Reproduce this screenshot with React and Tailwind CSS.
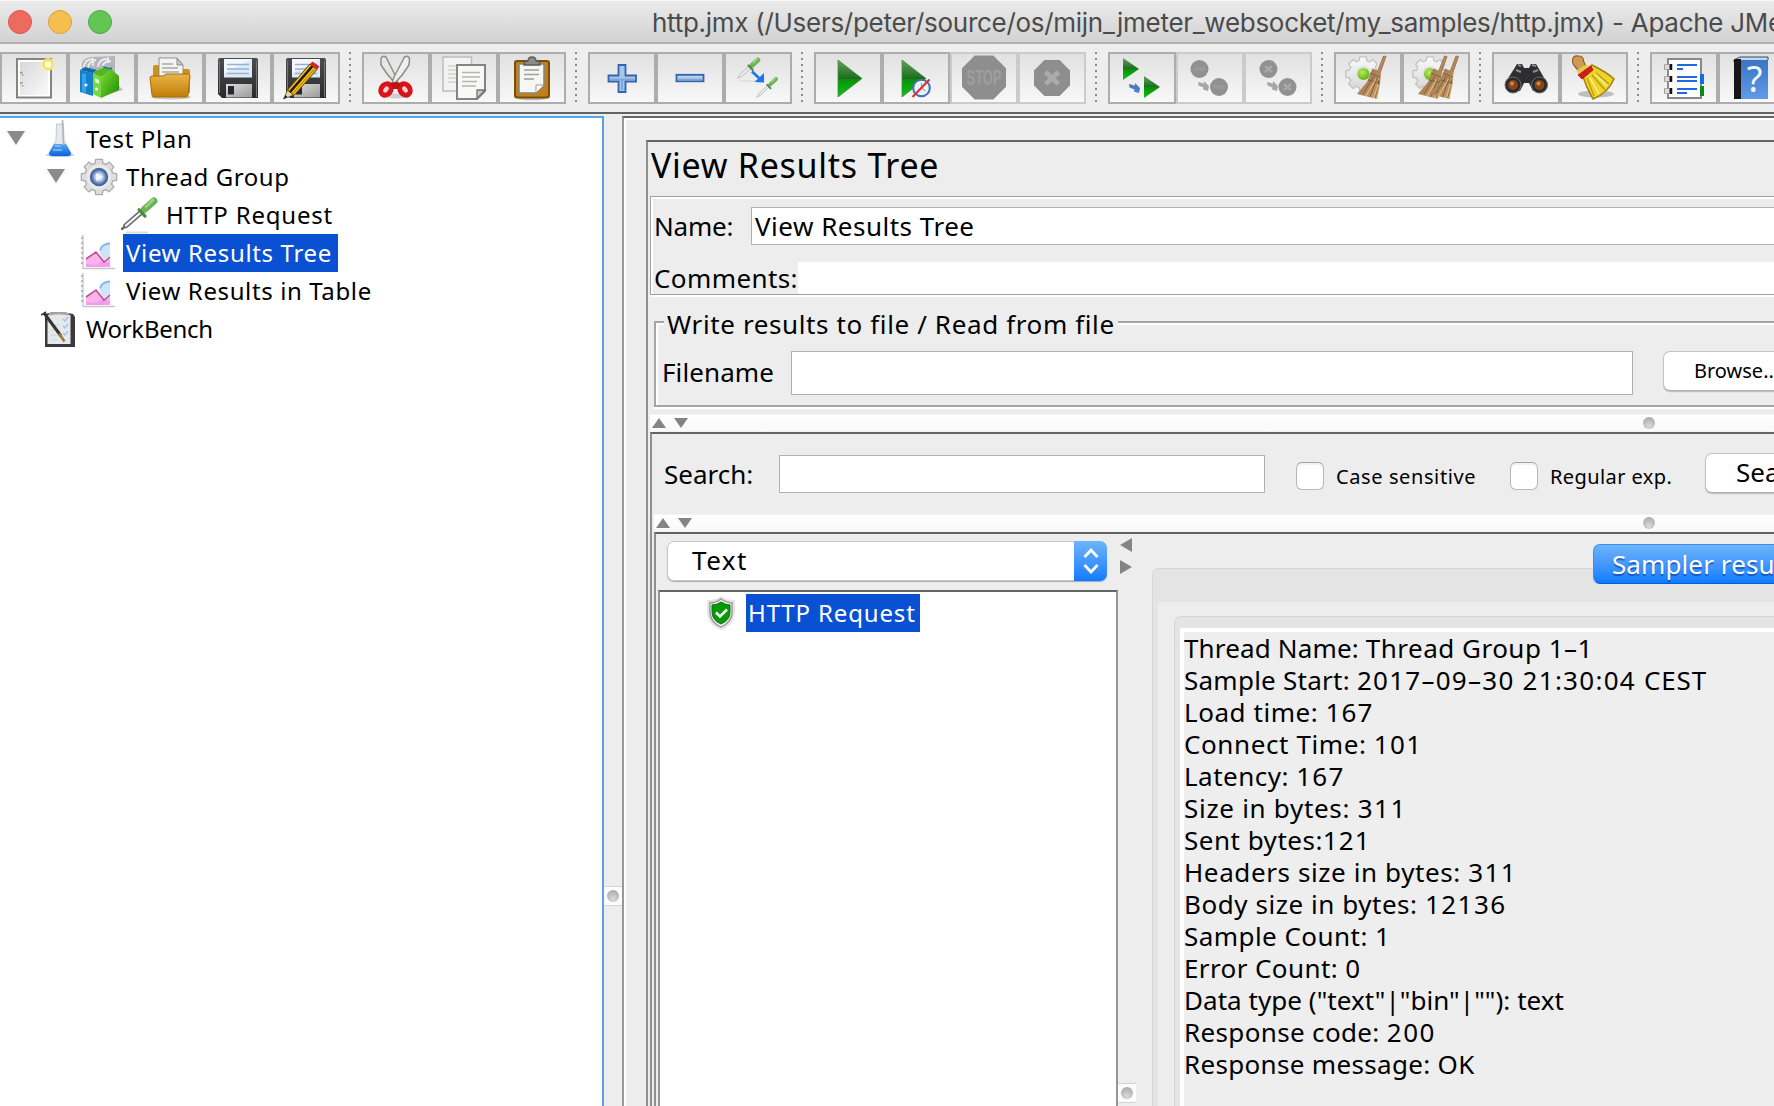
import React from "react";

/* ---------- shared drawing parts ---------- */

function Gradients() {
  return (
    <svg className="absolute h-0 w-0" aria-hidden="true">
      <defs>
        <linearGradient id="page" x1="0" y1="0" x2="1" y2="1">
          <stop offset="0" stopColor="#d8d8d8" />
          <stop offset="1" stopColor="#fafafa" />
        </linearGradient>
        <linearGradient id="gold" x1="0" y1="0" x2="0" y2="1">
          <stop offset="0" stopColor="#e9b548" />
          <stop offset="1" stopColor="#c07d08" />
        </linearGradient>
        <linearGradient id="green" x1="0" y1="0" x2="1" y2="1">
          <stop offset="0" stopColor="#7fdc3a" />
          <stop offset="1" stopColor="#1f8a00" />
        </linearGradient>
        <linearGradient id="play" x1="0" y1="0" x2="0" y2="1">
          <stop offset="0" stopColor="#5fa45f" />
          <stop offset="0.5" stopColor="#1d6b1d" />
          <stop offset="0.52" stopColor="#0a8f0a" />
          <stop offset="1" stopColor="#10c410" />
        </linearGradient>
        <linearGradient id="dark" x1="0" y1="0" x2="0" y2="1">
          <stop offset="0" stopColor="#4c4c50" />
          <stop offset="1" stopColor="#2b2b2e" />
        </linearGradient>
        <linearGradient id="metal" x1="0" y1="0" x2="1" y2="1">
          <stop offset="0" stopColor="#dcdcdc" />
          <stop offset="1" stopColor="#9b9b9b" />
        </linearGradient>
        <linearGradient id="straw" x1="0" y1="0" x2="1" y2="1">
          <stop offset="0" stopColor="#8d6b48" />
          <stop offset="1" stopColor="#d3a36a" />
        </linearGradient>
        <linearGradient id="book" x1="0" y1="0" x2="0" y2="1">
          <stop offset="0" stopColor="#3a74c4" />
          <stop offset="1" stopColor="#5f9bea" />
        </linearGradient>
        <linearGradient id="fluid" x1="0" y1="0" x2="0" y2="1">
          <stop offset="0" stopColor="#5aa7ee" />
          <stop offset="1" stopColor="#0a62e0" />
        </linearGradient>
        <linearGradient id="steel" x1="0" y1="0" x2="0" y2="1">
          <stop offset="0" stopColor="#fafafa" />
          <stop offset="1" stopColor="#d6d6d6" />
        </linearGradient>
        <radialGradient id="knob" cx="0.5" cy="0.75" r="0.8">
          <stop offset="0" stopColor="#dadada" />
          <stop offset="1" stopColor="#a6a6a6" />
        </radialGradient>
        <radialGradient id="ball" cx="0.4" cy="0.35" r="0.7">
          <stop offset="0" stopColor="#b6ee5a" />
          <stop offset="1" stopColor="#5cae0c" />
        </radialGradient>
        <radialGradient id="gearhub" cx="0.5" cy="0.5" r="0.5">
          <stop offset="0" stopColor="#ffffff" />
          <stop offset="0.4" stopColor="#c8d6ee" />
          <stop offset="1" stopColor="#2a4f94" />
        </radialGradient>
      </defs>
    </svg>
  );
}

function Gear({ cx, cy, r, stroke = "#c2c2c2", fill = "url(#steel)" }) {
  const pts = [];
  for (let i = 0; i < 8; i++) {
    const a = (i * Math.PI) / 4;
    [[-0.27, 0.8], [-0.19, 1], [0.19, 1], [0.27, 0.8]].forEach(([d, k]) => {
      pts.push(`${(cx + r * k * Math.cos(a + d)).toFixed(2)},${(cy + r * k * Math.sin(a + d)).toFixed(2)}`);
    });
  }
  return <polygon points={pts.join(" ")} fill={fill} stroke={stroke} strokeWidth="1.3" strokeLinejoin="round" />;
}

function Octagon({ cx, cy, r, ry = r, fill }) {
  const k = 0.42;
  const p = [[-k, -1], [k, -1], [1, -k], [1, k], [k, 1], [-k, 1], [-1, k], [-1, -k]];
  return <polygon points={p.map(([a, b]) => `${cx + a * r},${cy + b * ry}`).join(" ")} fill={fill} />;
}

function Pipette({ x1, y1, x2, y2, w = 3, glass = "#b4b8b4" }) {
  const mx = x1 + (x2 - x1) * 0.6;
  const my = y1 + (y2 - y1) * 0.6;
  const nx = x1 + (x2 - x1) * 0.12;
  const ny = y1 + (y2 - y1) * 0.12;
  const bx = x1 + (x2 - x1) * 0.7;
  const by = y1 + (y2 - y1) * 0.7;
  return (
    <g strokeLinecap="round">
      <line x1={x1} y1={y1} x2={nx} y2={ny} stroke={glass} strokeWidth={w * 0.7} />
      <line x1={nx} y1={ny} x2={mx} y2={my} stroke={glass} strokeWidth={w * 1.5} />
      <line x1={nx} y1={ny} x2={mx} y2={my} stroke="#f6f6f6" strokeWidth={w * 0.6} />
      <line x1={bx} y1={by} x2={x2} y2={y2} stroke="#6db455" strokeWidth={w * 2} />
      <line x1={bx + 1.5} y1={by - 2.5} x2={x2 - 1} y2={y2 - 1} stroke="#9bd585" strokeWidth={w * 0.7} />
      <line x1={mx - w * 0.6} y1={my - w * 0.7} x2={mx + w * 1.1} y2={my + w * 1.1} stroke="#4c8a3c" strokeWidth={w * 0.9} />
    </g>
  );
}

function Floppy() {
  return (
    <g>
      <path d="M14 8q0-2 2-2h36q2 0 2 2v38H18l-4-4z" fill="url(#dark)" />
      <path d="M15.500 9v32M52.500 9v36" stroke="#77777b" strokeWidth="1" />
      <rect x="20" y="7" width="28" height="18.500" fill="#dfeaf6" />
      <path d="M20 7h28l-28 14z" fill="#f4f8fd" />
      <path d="M23 12.500h22M23 17h22M23 21.500h22" stroke="#93b2d4" strokeWidth="1.5" />
      <rect x="22" y="32" width="26" height="13.500" fill="url(#metal)" />
      <rect x="24" y="34" width="6" height="8.500" fill="#28282a" />
    </g>
  );
}

function Broom({ dx = 0 }) {
  return (
    <g transform={`translate(${dx} 0)`}>
      <path d="M49.500 4l2.500.5-7 20-3-1z" fill="#b98a58" stroke="#8f6a44" strokeWidth="0.8" />
      <path d="M38.500 16.500L47 20 46 32 43 47 23 42 33 30z" fill="url(#straw)" />
      <path d="M36 21l10 4M34 28l12 3M40 24l-11 18M43 26l-7 19M45 28l-4 18" stroke="#7d5f42" strokeWidth="1" fill="none" />
      <path d="M42 27l-10 17M44 32l-4 14" stroke="#ecc48e" strokeWidth="1" />
    </g>
  );
}

function SmallArrow({ fill, x = 21, y = 31 }) {
  return <path transform={`translate(${x} ${y})`} d="M0 1l6 1.500V0l5 5-1 5-5-1.500.5-2-5-2z" fill={fill} />;
}

/* ---------- toolbar icons ---------- */

const icons = {
  blank: (
    <g>
      <rect x="17" y="7" width="34" height="38.500" fill="#fff" stroke="#85857f" strokeWidth="2" />
      <rect x="20" y="10" width="28" height="33" fill="url(#page)" />
      <path d="M20 20.500h2.500M22.500 22v1.500M20 31h2.500M22.500 33v1.500" stroke="#8c8c8c" strokeWidth="1.3" />
      <circle cx="48" cy="12.500" r="6.500" fill="#fdf7b0" opacity="0.75" />
      <circle cx="48" cy="12.500" r="4.500" fill="#fffce8" stroke="#f5e154" strokeWidth="2.500" />
    </g>
  ),
  templates: (
    <g>
      <path d="M34 44l21-6-4-4-9 1z" fill="#9a9a9a" opacity="0.6" />
      <path d="M14 16q-2-9 9-11l24-1v18l-22 2z" fill="#b3b6ba" />
      <path d="M16 16q0-9 9-9M20 17q0-8 8-9M30 15q1-8 9-8M34 16q1-7 9-7M25 6v8M40 5v6" stroke="#ececec" strokeWidth="1.8" fill="none" />
      <path d="M12 18l13 3v23l-13-4z" fill="#1580c8" />
      <path d="M12 18l5-3 12 3-4 3zM33 14l9 2 2-1-1 6z" fill="#0a69ae" />
      <path d="M14 21l4 1v19l-4-1z" fill="#35a5ea" />
      <path d="M25 21l8 4v21l-8-4z" fill="#76d943" />
      <path d="M33 25l10-8 8 7v14l-18 8z" fill="url(#green)" />
      <path d="M25 21l9-5 9 1-10 8z" fill="#55b61e" />
      <circle cx="28.500" cy="37" r="1.600" fill="#fff" />
      <circle cx="18" cy="33" r="1.600" fill="#e2f3ff" />
      <path d="M27 26l4 2v4l-4-2z" fill="#e5fbd6" />
    </g>
  ),
  open: (
    <g>
      <ellipse cx="35" cy="45" rx="20" ry="2.500" fill="#999" opacity="0.5" />
      <path d="M17 15q0-2 2-2h6l3 4h24q2 0 2 2v22H17z" fill="#cf9117" />
      <path d="M23 6h18l6 7v15H23z" fill="#f4f4f2" stroke="#90908c" strokeWidth="1" />
      <path d="M41 6v7h6z" fill="#c9cbc7" stroke="#8a8a86" strokeWidth="1" />
      <path d="M26 12h11M26 16h16M26 20h17" stroke="#a9a9a9" strokeWidth="1.500" />
      <path d="M14 26q0-2 2-2h11l3-2h22q2 0 2 2l-2 19q0 2-2 2H18q-2 0-2-2z" fill="url(#gold)" stroke="#a86c04" strokeWidth="1" />
    </g>
  ),
  save: <Floppy />,
  saveAs: (
    <g>
      <Floppy />
      <path d="M11.500 47l4-9 6 5z" fill="#ecd2a4" stroke="#6b5530" strokeWidth="0.8" />
      <path d="M11.500 47l2-4 2 2z" fill="#222" />
      <path d="M15.500 38L38 12l7 5.500L22 43.500z" fill="#f2bd20" stroke="#5a4300" strokeWidth="1" />
      <path d="M18 40L40.500 14" stroke="#1d1a10" strokeWidth="2.600" />
      <path d="M20.500 42L43.500 16" stroke="#c98f0a" strokeWidth="1.200" />
      <path d="M38 12l2.500-2.500 7 5L45 17.500z" fill="#d8222c" />
    </g>
  ),
  cut: (
    <g>
      <ellipse cx="34" cy="44" rx="11" ry="2.500" fill="#aaa" opacity="0.5" />
      <path d="M19 7q1-4 5-2l10 20 2 6h-3q-8-8-14-18z" fill="#e6e6e4" stroke="#8d8d89" strokeWidth="1.500" />
      <path d="M47.500 7q-1-4-5-2L32 25l-2 6h3q8-8 14-18z" fill="#efefed" stroke="#8d8d89" strokeWidth="1.500" />
      <ellipse cx="24" cy="37.500" rx="4.800" ry="6" transform="rotate(35 24 37.500)" fill="#f0d4d4" stroke="#d8141a" strokeWidth="5" />
      <ellipse cx="43" cy="37.500" rx="4.800" ry="6" transform="rotate(-35 43 37.500)" fill="#f0d4d4" stroke="#d8141a" strokeWidth="5" />
      <path d="M28 31l5.500-1 5.500 1-3 6h-5z" fill="#c01015" />
    </g>
  ),
  copy: (
    <g>
      <rect x="13" y="5" width="28.500" height="34" fill="#f3f3f3" stroke="#bdbdbd" strokeWidth="1.500" />
      <path d="M18 14h8M18 18h8M18 22h8M18 26h8M18 30h8" stroke="#d2d2d2" strokeWidth="1.300" />
      <path d="M27 13h28v26l-8 8H27z" fill="#f8f8f7" stroke="#83857f" strokeWidth="2" />
      <path d="M55 38l-8 8.500v-8.500z" fill="#c8cac5" stroke="#73756f" strokeWidth="1.300" />
      <path d="M32 20.500h18M32 25h18M32 29.500h15M32 34h14" stroke="#b4b4b4" strokeWidth="1.600" />
    </g>
  ),
  paste: (
    <g>
      <ellipse cx="34" cy="46.500" rx="14" ry="1.800" fill="#999" opacity="0.6" />
      <rect x="17" y="9" width="34" height="36.500" rx="2" fill="#c0801c" stroke="#7b4d06" strokeWidth="2" />
      <path d="M21 12h25v21l-8 8H21z" fill="#f6f6f5" stroke="#85857f" strokeWidth="1.500" />
      <path d="M46 33l-8 8v-8z" fill="#fff" stroke="#999" strokeWidth="1" />
      <path d="M26 18h15M26 22.500h15M26 27h10" stroke="#9d9d9d" strokeWidth="1.600" />
      <path d="M26 12q0-3 4-3 0-4 4-4t4 4q4 0 4 3v1H26z" fill="#8b8d86" stroke="#5b5d58" strokeWidth="1.300" />
    </g>
  ),
  plus: (
    <g>
      <path d="M30.500 13h7v10.500H48v6H37.500V40h-7V29.500H20.500v-6h10z" fill="#a9c6e8" stroke="#2f66ad" strokeWidth="1.800" />
      <path d="M34 27v11M22 27.500h24.500" stroke="#7fa8d8" strokeWidth="2" />
    </g>
  ),
  minus: (
    <g>
      <rect x="20.500" y="22.800" width="27" height="6.500" fill="#b6cfec" stroke="#2f66ad" strokeWidth="1.800" />
      <path d="M22 27.500h24" stroke="#7fa8d8" strokeWidth="1.800" />
    </g>
  ),
  toggle: (
    <g>
      <path d="M15 29h24" stroke="#ddd" strokeWidth="1.500" />
      <Pipette x1={14} y1={26} x2={34} y2={8} w={2.400} glass="#c4c4c4" />
      <Pipette x1={33} y1={45} x2={52} y2={27} w={2} glass="#c4c4c4" />
      <path d="M28 19.500l7 6.500" stroke="#1e74f0" strokeWidth="2.600" />
      <path d="M40 21v9.500l-9.500-.5z" fill="#1e74f0" />
    </g>
  ),
  start: <path d="M24 8l24 18.500L24 45z" fill="url(#play)" stroke="#3f8f3f" strokeWidth="0.8" />,
  startNoPause: (
    <g>
      <path d="M20 8l24 18.500L20 45z" fill="url(#play)" stroke="#3f8f3f" strokeWidth="0.8" />
      <circle cx="39.500" cy="36" r="8.300" fill="#eef3fa" stroke="#3a74b8" strokeWidth="2" />
      <path d="M39.500 31v5l4 3" stroke="#9aa" strokeWidth="1.300" fill="none" />
      <path d="M30.500 45l17-17.500" stroke="#e03030" strokeWidth="2.200" />
    </g>
  ),
  stop: (
    <g>
      <Octagon cx={34} cy={25.500} r={22} ry={22} fill="#8e8e8e" />
      <text x="34" y="33" textAnchor="middle" textLength="35" lengthAdjust="spacingAndGlyphs" className="font-['Liberation_Sans'] text-[22px] font-bold" fill="#9e9e9e">STOP</text>
    </g>
  ),
  shutdown: (
    <g>
      <Octagon cx={34} cy={26} r={18} fill="#8e8e8e" />
      <path d="M27.500 20l13 12M40.500 20l-13 12" stroke="#ababab" strokeWidth="5" />
    </g>
  ),
  remoteStart: (
    <g>
      <path d="M15 6l16 11-16 11z" fill="url(#play)" />
      <path d="M36 24l16 11-16 11z" fill="url(#play)" />
      <SmallArrow fill="#4a7cc0" />
    </g>
  ),
  remoteStop: (
    <g>
      <circle cx="23.500" cy="17" r="9" fill="#919191" />
      <circle cx="43" cy="35" r="9" fill="#919191" />
      <path d="M18 17h11M37.500 35h11" stroke="#9a9a9a" strokeWidth="3.500" />
      <SmallArrow fill="#a6a6a6" x={22} y={29} />
    </g>
  ),
  remoteShutdown: (
    <g>
      <circle cx="24.500" cy="17" r="9" fill="#919191" />
      <circle cx="43.500" cy="35" r="9" fill="#919191" />
      <path d="M21 14l7 6M28 14l-7 6M40 32l7 6M47 32l-7 6" stroke="#a8a8a8" strokeWidth="2.500" />
      <SmallArrow fill="#a6a6a6" x={23} y={29} />
    </g>
  ),
  clear: (
    <g>
      <Gear cx={29} cy={22} r={17.500} />
      <circle cx="29.500" cy="22" r="8" fill="#e2e2e2" />
      <circle cx="29.500" cy="22" r="6" fill="url(#ball)" />
      <Broom />
    </g>
  ),
  clearAll: (
    <g>
      <Gear cx={28} cy={22} r={17.500} />
      <circle cx="28" cy="22" r="8" fill="#e2e2e2" />
      <circle cx="28" cy="22" r="6" fill="url(#ball)" />
      <Broom dx={-7} />
      <Broom dx={4.500} />
    </g>
  ),
  find: (
    <g>
      <path d="M22 17l3-5h5l2 4h5l2-4h5l3 5 8 14-5 8h-9l-4-8h-5l-4 8h-9l-6-8z" fill="#2e2e30" />
      <path d="M26 13l3 1M40 13l4 1M24 18l5 2M41 20l5-2" stroke="#8d8d90" strokeWidth="2" />
      <circle cx="21" cy="33" r="8" fill="#2a2a2c" stroke="#6e6e70" strokeWidth="1" />
      <circle cx="47.500" cy="33" r="8" fill="#2a2a2c" stroke="#6e6e70" strokeWidth="1" />
      <circle cx="21" cy="33" r="5" fill="#8a4414" />
      <circle cx="47.500" cy="33" r="5" fill="#8a4414" />
      <circle cx="20" cy="31.500" r="2" fill="#c98a5a" />
      <circle cx="46.500" cy="31.500" r="2" fill="#c98a5a" />
    </g>
  ),
  reset: (
    <g>
      <ellipse cx="36" cy="42" rx="18" ry="3.500" fill="#999" opacity="0.6" />
      <path d="M12.500 9q0-6 6-5 5 0 5 5l3 7-7 4-5-6q-2-2-2-5z" fill="#cf9a52" stroke="#8a5f20" strokeWidth="1.200" />
      <path d="M22 22l10-9q16 8 22 14-6 14-21 20-7-12-11-25z" fill="#efd32c" stroke="#a08208" strokeWidth="1.500" />
      <path d="M27 26l7 18M32 23l13 15M36 21l13 11" stroke="#b99a14" strokeWidth="1.300" />
      <path d="M30 26l9 16M35 22l12 12" stroke="#fbf08a" strokeWidth="1.500" />
      <path d="M18 23l13-9 2 4-11 9z" fill="#d61a1a" stroke="#a01010" strokeWidth="0.8" />
      <path d="M17 18l8-5 5 1-12 8z" fill="#e9c93c" />
    </g>
  ),
  functions: (
    <g>
      <rect x="18" y="7" width="33" height="39" fill="#fff" stroke="#7e7e7e" strokeWidth="1.800" />
      <path d="M27 13h20M27 17h6M27 25h20M27 29h20M27 37h20M27 41h10" stroke="#1f68e6" strokeWidth="1.800" />
      <path d="M14 15h7M14 27h7M14 39h7" stroke="#9a9a9a" strokeWidth="5.500" />
      <path d="M15 15h4M15 27h4M15 39h4" stroke="#dcdcdc" strokeWidth="4" />
      <path d="M21 12v6M21 24v6M21 36v6" stroke="#111" strokeWidth="2.500" />
      <rect x="50" y="22" width="4" height="10" fill="#1668ee" />
      <rect x="50" y="34" width="4" height="10" fill="#0b8a14" />
    </g>
  ),
  help: (
    <g>
      <path d="M16 8l6-3h28v3l-3 2H16z" fill="#c9d6e6" stroke="#2b4c7c" strokeWidth="1" />
      <rect x="22" y="8" width="28" height="39" fill="url(#book)" />
      <rect x="16" y="7" width="7" height="40" fill="#161616" />
      <text x="36.500" y="40" textAnchor="middle" className="font-['Noto_Sans'] text-[36px]" fill="#f3f8ff">?</text>
    </g>
  ),
};

const toolbar = [
  [["blank"], ["templates"], ["open"], ["save"], ["saveAs"]],
  [["cut"], ["copy"], ["paste"]],
  [["plus"], ["minus"], ["toggle"]],
  [["start"], ["startNoPause"], ["stop", true], ["shutdown", true]],
  [["remoteStart"], ["remoteStop", true], ["remoteShutdown", true]],
  [["clear"], ["clearAll"]],
  [["find"], ["reset"]],
  [["functions"], ["help"]],
];

function ToolButton({ name, disabled }) {
  return (
    <div
      className={
        "h-[52px] w-[68px] shrink-0 border-2 bg-linear-to-b from-[#e1e1e1] to-[#f8f8f8] " +
        (disabled ? "border-[#cbcbcb]" : "border-[#adadad]")
      }
    >
      <svg viewBox="2 2 64 48" className="block h-[48px] w-[64px]">{icons[name]}</svg>
    </div>
  );
}

function Toolbar() {
  return (
    <div className="flex h-[68px] shrink-0 items-start bg-[#eeeeee] pt-2">
      {toolbar.map((group, i) => (
        <React.Fragment key={i}>
          {i > 0 && (
            <div className="flex w-[22px] shrink-0 flex-col items-center gap-1 pr-[2px]">
              {Array.from({ length: 9 }, (_, k) => (
                <div key={k} className="h-[2px] w-[2px] bg-[#8a8a8a]" />
              ))}
            </div>
          )}
          {group.map(([name, disabled]) => (
            <ToolButton key={name} name={name} disabled={disabled} />
          ))}
        </React.Fragment>
      ))}
    </div>
  );
}

/* ---------- tree ---------- */

const treeIcons = {
  flask: (
    <svg viewBox="0 0 30 38" className="h-[38px] w-[30px]">
      <ellipse cx="15" cy="35" rx="14" ry="2" fill="#a8b4c4" opacity="0.7" />
      <path d="M11.500 4h7l.5 17 7 12q0 3-3 3H7q-3 0-3-3l7-12z" fill="#e6eaee" stroke="#c2c8d0" strokeWidth="1" />
      <path d="M9 24h12l5 9q0 3-3 3H7q-3 0-3-3z" fill="url(#fluid)" />
      <path d="M17.500 0l1 25" stroke="#b5bac0" strokeWidth="1.800" />
      <path d="M10 26h6M8 30h9" stroke="#84c1f6" strokeWidth="1.500" />
    </svg>
  ),
  gear: (
    <svg viewBox="0 0 38 38" className="h-[38px] w-[38px]">
      <Gear cx={19} cy={19} r={18} stroke="#ababab" fill="#dedede" />
      <circle cx="19" cy="19" r="12" fill="#ebebeb" />
      <circle cx="19" cy="19" r="8.500" fill="url(#gearhub)" stroke="#4a6aa6" strokeWidth="1.500" />
      <path d="M16 15l7 4-7 4z" fill="#f8faff" opacity="0.8" />
    </svg>
  ),
  pipette: (
    <svg viewBox="0 0 38 38" className="h-[38px] w-[38px]">
      <path d="M6 36.500h22" stroke="#dadada" strokeWidth="2" />
      <Pipette x1={2} y1={33} x2={34} y2={5} w={3.500} glass="#6a6a6a" />
    </svg>
  ),
  chart: (
    <svg viewBox="0 0 38 38" className="h-[38px] w-[38px]">
      <path d="M6 24l10-6 8 9 6-4v10H6z" fill="#f9b4ee" />
      <path d="M6 30l10 1 6-4 8 2v4H6z" fill="#f59bef" />
      <path d="M30 9q-9 1-10 8 0 5 4 9l6-4z" fill="#cfe4fa" />
      <path d="M30 9.500q-8 0-10 7" stroke="#7db7ef" strokeWidth="1.800" fill="none" />
      <path d="M6 25l10-7 8 10 6-5" stroke="#c4508f" strokeWidth="1.600" fill="none" />
      <path d="M3 1v33.500h32" stroke="#c6c6c6" strokeWidth="1.300" fill="none" />
      <path d="M1 4h2M1 9h2M1 14h2M1 19h2M1 24h2M1 29h2" stroke="#a5a5a5" strokeWidth="1.300" />
    </svg>
  ),
  bench: (
    <svg viewBox="0 0 36 38" className="h-[38px] w-[36px]">
      <path d="M4 4q12-4 28 0l2 3v30H4z" fill="#3a3a3c" />
      <path d="M6.500 5q10-3 23 0v29h-23z" fill="#e6e9ec" />
      <path d="M8 3q10-2 20 0v2.500q-10-2-20 0z" fill="#a8a8a8" />
      <path d="M22 9l2 2 3-4M22 16l2 2 3-4M22 23l2 2 3-4" stroke="#9cc2ee" strokeWidth="1.300" fill="none" />
      <path d="M10 15h9M10 20h9M10 25h8M10 30h6" stroke="#cfd4da" strokeWidth="1" />
      <path d="M3 3l17 23" stroke="#333" strokeWidth="3" />
      <path d="M18 23.500l5.500 8" stroke="#a07a3c" strokeWidth="2.600" />
      <path d="M0 5l5-3" stroke="#333" strokeWidth="1.500" />
    </svg>
  ),
};

const tree = [
  { pad: "pl-[7px]", open: true, iconBox: "ml-[20px] mr-[8px] w-[30px]", icon: "flask", text: "Test Plan", track: "tracking-[0.65px]" },
  { pad: "pl-[47px]", open: true, iconBox: "ml-[15px] mr-[5px] w-[38px]", icon: "gear", text: "Thread Group", track: "tracking-[0.58px]" },
  { pad: "pl-[120px]", iconBox: "mr-[5px] w-[38px]", icon: "pipette", text: "HTTP Request", track: "tracking-[0.8px]" },
  { pad: "pl-[80px]", iconBox: "mr-[5px] w-[38px]", icon: "chart", text: "View Results Tree", track: "tracking-[0.65px]", selected: true },
  { pad: "pl-[80px]", iconBox: "mr-[5px] w-[38px]", icon: "chart", text: "View Results in Table", track: "tracking-[0.62px]" },
  { pad: "pl-[41px]", iconBox: "mr-[6px] w-[36px]", icon: "bench", text: "WorkBench", track: "tracking-[-0.3px]" },
];

function TreePanel() {
  return (
    <div className="h-full w-[604px] shrink-0 border-t-2 border-r-2 border-[#55a5e8] bg-white pt-[2px] text-[24px] leading-[37px]">
      {tree.map((n) => (
        <div key={n.text} className={"flex h-[38px] items-center " + n.pad}>
          {n.open && (
            <svg viewBox="0 0 18 14" className="-mt-[2px] h-[14px] w-[18px]">
              <path d="M0 0h18L9 14z" fill="#8b8b8b" />
            </svg>
          )}
          <div className={"flex shrink-0 " + n.iconBox}>{treeIcons[n.icon]}</div>
          <div className={"h-[38px] pl-[3px] whitespace-nowrap " + n.track + (n.selected ? " w-[215px] bg-[#0a50d2] text-white" : "")}>
            {n.text}
          </div>
        </div>
      ))}
    </div>
  );
}

/* ---------- split panes ---------- */

function Knob() {
  return (
    <svg viewBox="0 0 12 12" className="block h-3 w-3 shrink-0">
      <circle cx="6" cy="6" r="6" fill="url(#knob)" />
    </svg>
  );
}

function HorizontalSplitter({ left, gap }) {
  return (
    <div className={"flex h-[18px] items-center border-t border-b border-t-[#f4f4f4] border-b-[#f4f4f4] bg-linear-to-b from-white to-[#f9f9f9] " + left}>
      <svg viewBox="0 0 36 10" className="h-[10px] w-[36px] shrink-0">
        <path d="M0 10L7 0l7 10zM22 0h14l-7 10z" fill="#848484" />
      </svg>
      <div className={gap}>
        <Knob />
      </div>
    </div>
  );
}

function VerticalKnob() {
  return (
    <div className="flex h-[20px] w-[18px] items-center justify-center border-y border-[#d4d4d4] bg-[#fcfcfc]">
      <Knob />
    </div>
  );
}

function Checkbox({ label, track }) {
  return (
    <div className="flex items-start">
      <div className="mt-[7px] h-[28px] w-[28px] rounded-[6px] border border-[#b9b9b9] border-t-[#a2a2a2] bg-white shadow-[inset_0_2px_2px_#f0f0f0]" />
      <span className={"ml-3 text-[20px] leading-[43px] whitespace-nowrap " + track}>{label}</span>
    </div>
  );
}

/* ---------- results ---------- */

const result = [
  [["Thread Name: ", "tracking-[0.15px]"], ["Thread Group 1–1", "tracking-[0.5px]"]],
  [["Sample Start: ", "tracking-[0.25px]"], ["2017–09–30 21:30:04 ", "tracking-[1.27px]"], ["CEST", "tracking-[0.85px]"]],
  [["Load time: ", "tracking-[0.55px]"], ["167", "tracking-[1.1px]"]],
  [["Connect Time: ", "tracking-[0.6px]"], ["101", "tracking-[1.3px]"]],
  [["Latency: ", "tracking-[0.5px]"], ["167", "tracking-[1.2px]"]],
  [["Size in bytes: ", "tracking-[0.7px]"], ["311", "tracking-[1.6px]"]],
  [["Sent bytes:", "tracking-[0.5px]"], ["121", "tracking-[1.1px]"]],
  [["Headers size in bytes: ", "tracking-[0.6px]"], ["311", "tracking-[1.4px]"]],
  [["Body size in bytes: ", "tracking-[0.55px]"], ["12136", "tracking-[1.45px]"]],
  [["Sample Count: 1", "tracking-[0.45px]"]],
  [["Error Count: 0", "tracking-[0.4px]"]],
  [['Data type ("text"|"bin"|""): text', "tracking-[0.05px]"]],
  [["Response code: ", "tracking-[0.35px]"], ["200", "tracking-[1.5px]"]],
  [["Response message: OK", "tracking-[0.32px]"]],
];

function ResultsPane() {
  return (
    <div className="flex min-w-0 flex-1">
      <div className="flex w-[462px] shrink-0 flex-col pt-[7px]">
        <div className="ml-[11px] flex h-[40px] w-[440px] shrink-0 overflow-hidden rounded-[7px] shadow-[0_1px_1px_#aaaaaa]">
          <div className="flex-1 rounded-l-[7px] border border-r-0 border-[#c6c6c6] bg-white pl-[24px] leading-[37px] tracking-[1.5px]">
            Text
          </div>
          <div className="flex w-[33px] items-center justify-center bg-linear-to-b from-[#6cb3fa] to-[#0a7bff]">
            <svg viewBox="0 0 16 26" className="h-[26px] w-[16px]">
              <path d="M1.500 9L8 2l6.500 7M1.500 17L8 24l6.500-7" stroke="#fff" strokeWidth="2.800" fill="none" />
            </svg>
          </div>
        </div>
        <div className="mt-[9px] ml-[2px] flex-1 border-x-2 border-t-2 border-x-[#969696] border-t-[#666666] bg-white pt-[2px]">
          <div className="flex h-[38px] items-center pl-[45px]">
            <svg viewBox="0 0 32 36" className="mr-[9px] h-[36px] w-[32px]">
              <path d="M16 2q6 4 13 4v11q0 12-13 17Q3 29 3 17V6q7 0 13-4z" fill="#c9c9c7" stroke="#e6e6e6" strokeWidth="2" />
              <path d="M16 4q6 4 11 4v9q0 10-11 15Q5 27 5 17V8q6 0 11-4z" fill="#f0f0f0" stroke="#9a9a9a" strokeWidth="1.300" />
              <path d="M16 7q5 3 9 3v7q0 8-9 12-9-4-9-12v-7q5 0 9-3z" fill="#079907" stroke="#04780a" strokeWidth="1" />
              <path d="M11 17.500l4 4 7-7" stroke="#fff" strokeWidth="2.500" fill="none" />
            </svg>
            <div className="h-[38px] w-[174px] bg-[#0a50d2] pl-[2px] text-[24px] leading-[37px] tracking-[0.85px] whitespace-nowrap text-white">
              HTTP Request
            </div>
          </div>
        </div>
      </div>

      <div className="flex w-[18px] shrink-0 flex-col items-center justify-between pt-[4px] pb-[3px]">
        <svg viewBox="0 0 12 36" className="-ml-[2px] h-[36px] w-[12px]">
          <path d="M12 0v14L0 7zM0 22v14l12-7z" fill="#848484" />
        </svg>
        <VerticalKnob />
      </div>

      <div className="relative ml-4 w-[640px] shrink-0 pt-[34px]">
        <div className="flex h-full flex-col rounded-tl-[7px] border-t border-l border-[#d6d6d6] bg-[#e4e4e4] pt-[33px] pl-[5px]">
          <div className="flex-1 bg-[#ededed] pt-[14px] pl-4">
            <div className="h-full rounded-tl-[7px] border-t border-l border-[#d6d6d6] bg-[#e4e4e4] pt-[11px] pl-[5px]">
              <div className="h-full border-t-4 border-l-4 border-white bg-[#eeeeee] leading-8 whitespace-pre">
                {result.map((parts) => (
                  <div key={parts[0][0]}>
                    {parts.map(([text, track]) => (
                      <span key={text} className={track}>{text}</span>
                    ))}
                  </div>
                ))}
              </div>
            </div>
          </div>
        </div>
        <div className="absolute top-[10px] left-[441px] h-[40px] w-[300px] rounded-[7px] border border-[#3a8ef0] border-b-[#0560d8] bg-linear-to-b from-[#6cb3fa] to-[#0a7bff] pl-[18px] leading-[38px] tracking-[0.1px] whitespace-nowrap text-white [text-shadow:0_2px_1px_rgba(0,40,120,0.5)]">
          Sampler result
        </div>
      </div>
    </div>
  );
}

function MainPanel() {
  return (
    <div className="h-full flex-1 border-t-2 border-l-2 border-t-[#666666] border-l-[#999999]">
      <div className="h-full border-t-2 border-l-2 border-white pt-[20px] pl-[20px]">
        <div className="flex h-full flex-col border-t-2 border-l-2 border-t-[#636363] border-l-[#8f8f8f]">
          <div className="h-[54px] shrink-0 pl-[3px] text-[34px] leading-[46px] tracking-[0.72px]">View Results Tree</div>

          <div className="ml-[2px] h-[99px] shrink-0 border border-r-0 border-[#a0a0a0] shadow-[inset_2px_2px_0_white,0_2px_0_white]">
            <div className="mt-[10px] flex h-[38px] leading-[38px]">
              <div className="w-[100px] pl-[3px] tracking-[-0.2px]">Name:</div>
              <div className="flex-1 border border-r-0 border-[#b0b0b0] bg-white pl-[3px] leading-[36px] tracking-[0.5px]">View Results Tree</div>
            </div>
            <div className="mt-[17px] flex h-[32px] leading-[32px]">
              <div className="w-[147px] pl-[3px] tracking-[0.4px]">Comments:</div>
              <div className="flex-1 bg-white" />
            </div>
          </div>

          <div className="relative mt-[26px] ml-[6px] h-[86px] shrink-0 border-2 border-r-0 border-[#a5a5a5] shadow-[inset_2px_2px_0_white,0_2px_0_white]">
            <div className="absolute top-[-15px] left-[8px] h-[32px] w-[454px] bg-[#ededed] pl-[3px] leading-[32px] tracking-[0.62px] whitespace-nowrap">
              Write results to file / Read from file
            </div>
            <div className="mt-[28px] flex">
              <div className="w-[135px] shrink-0 pl-[6px] leading-[42px] tracking-[0.1px]">Filename</div>
              <div className="h-[44px] w-[842px] shrink-0 border border-[#b0b0b0] bg-white" />
              <div className="ml-[30px] h-[40px] w-[150px] shrink-0 rounded-[7px] border border-[#c4c4c4] border-b-[#b0b0b0] bg-white pl-[30px] text-[20px] leading-[37px] shadow-[0_1px_1px_#bbbbbb]">
                Browse...
              </div>
            </div>
          </div>

          <div className="h-[7px] shrink-0" />
          <HorizontalSplitter left="ml-[2px] pl-[2px] shrink-0" gap="ml-[955px]" />
          <div className="ml-[2px] flex flex-1 flex-col border-t-2 border-l-2 border-t-[#636363] border-l-[#8f8f8f]">
            <div className="flex h-[80px] shrink-0 items-start pt-[21px]">
              <div className="w-[127px] shrink-0 pl-[12px] leading-[38px]">Search:</div>
              <div className="h-[38px] w-[486px] shrink-0 border border-[#b0b0b0] bg-white" />
              <div className="ml-[31px] w-[214px] shrink-0">
                <Checkbox label="Case sensitive" track="tracking-[0.6px]" />
              </div>
              <div className="w-[195px] shrink-0">
                <Checkbox label="Regular exp." track="tracking-[0.4px]" />
              </div>
              <div className="-mt-[2px] h-[40px] w-[150px] shrink-0 rounded-[7px] border border-[#c4c4c4] border-b-[#b0b0b0] bg-white pl-[30px] leading-[37px] shadow-[0_1px_1px_#bbbbbb]">
                Search
              </div>
            </div>
            <HorizontalSplitter left="ml-[2px] pl-[2px] shrink-0" gap="ml-[951px]" />
            <div className="ml-[2px] flex flex-1 border-t-2 border-l-2 border-t-[#636363] border-l-[#8f8f8f]">
              <ResultsPane />
            </div>
          </div>
        </div>
      </div>
    </div>
  );
}

export default function App() {
  return (
    <div className="flex h-[1106px] w-[1774px] flex-col overflow-hidden bg-[#ededed] font-['Noto_Sans',sans-serif] text-[26px] text-black">
      <Gradients />
      <div className="flex h-[44px] shrink-0 items-center border-t border-b-2 border-t-[#f6f6f6] border-b-[#b1b1b1] bg-linear-to-b from-[#ebebeb] to-[#d2d2d2]">
        <div className="ml-2 flex gap-4">
          <div className="h-6 w-6 rounded-full border border-[#d9544b] bg-[#ee6a5f]" />
          <div className="h-6 w-6 rounded-full border border-[#dba03c] bg-[#f5bf4f]" />
          <div className="h-6 w-6 rounded-full border border-[#4ba93f] bg-[#61c654]" />
        </div>
        <div className="ml-[540px] pt-[2px] font-['Inter',sans-serif] text-[26px] tracking-[-0.28px] whitespace-nowrap text-[#4b4b4b]">
          http.jmx (/Users/peter/source/os/mijn_jmeter_websocket/my_samples/http.jmx) - Apache JMeter
        </div>
      </div>
      <Toolbar />
      <div className="h-[4px] shrink-0 border-t-2 border-[#636363] bg-[#eeeeee]" />
      <div className="flex h-[990px] shrink-0">
        <TreePanel />
        <div className="flex w-[18px] shrink-0 flex-col">
          <div className="mt-[770px]">
            <VerticalKnob />
          </div>
        </div>
        <MainPanel />
      </div>
    </div>
  );
}
